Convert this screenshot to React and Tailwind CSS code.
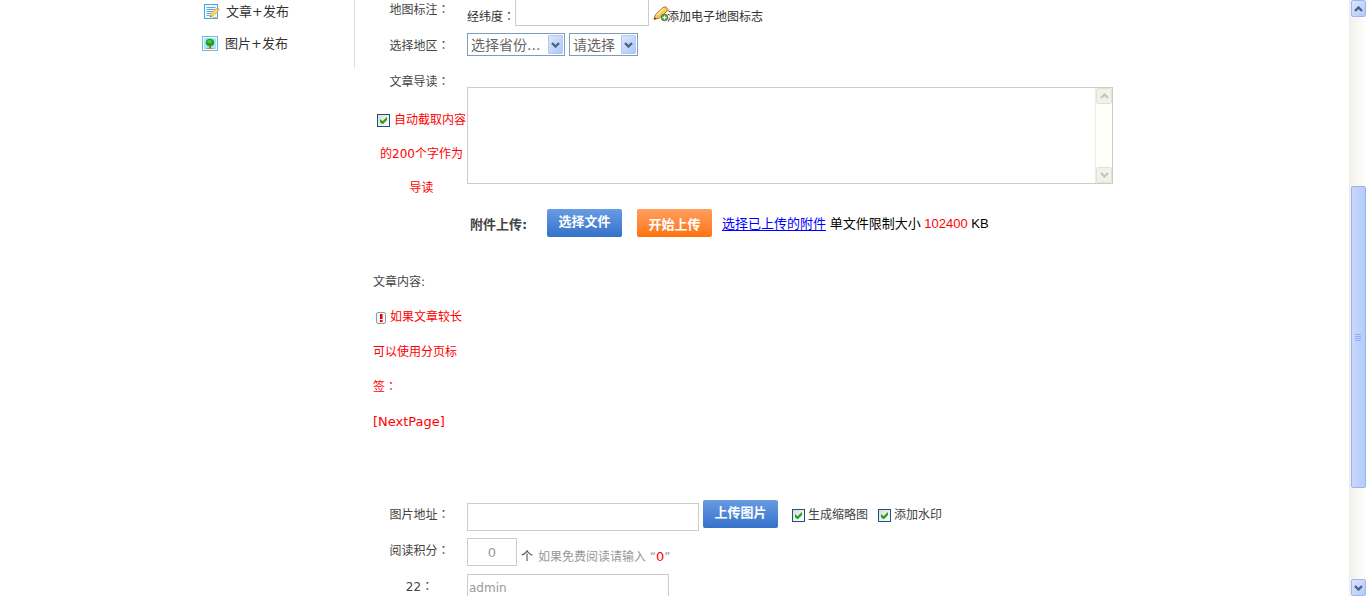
import { useState } from "react";
import clsx from "clsx";

// fullwidth colon, centred in its cell
function Colon() {
  return <span className="leading-none [font-family:'Noto_Sans_CJK_JP',sans-serif]">：</span>;
}

function NoteIcon() {
  return (
    <svg width="16" height="16" viewBox="0 0 16 16" aria-hidden="true">
      <rect x="0.5" y="0.5" width="13" height="14" fill="#f2faff" stroke="#2fb0e8" />
      <path d="M2.5 3.5h9M2.5 5.5h9M2.5 7.5h7M2.5 9.5h5M2.5 11.5h3" stroke="#6fa3d8" />
      <path d="M6 13l1.200-3.500 5.300-5 2.200 2.200-5.200 5z" fill="#f8d860" stroke="#d9a93c" strokeWidth="0.7" />
      <path d="M12.500 4.500l1.500-1 1.800 1.800-1.100 1.400z" fill="#ee9c9c" />
      <path d="M6 13l.6-1.800 1.300 1.200z" fill="#555" />
      <path d="M9 13.500h5" stroke="#e8b64a" />
    </svg>
  );
}

function PictureIcon() {
  return (
    <svg width="16" height="16" viewBox="0 0 16 16" aria-hidden="true">
      <rect x="0.5" y="0.5" width="15" height="14" fill="#fff" stroke="#5cc0ea" />
      <rect x="2" y="2" width="12" height="11" fill="#a5e6fb" />
      <path d="M3 13q5-2.500 10 0z" fill="#d98a3c" />
      <path d="M7.200 8h1.800v4.500H7.200z" fill="#b5531c" />
      <ellipse cx="8" cy="6.500" rx="4.200" ry="3.800" fill="#23a01e" />
      <ellipse cx="7.500" cy="5.500" rx="2.200" ry="1.800" fill="#46c63c" />
    </svg>
  );
}

function PencilAddIcon() {
  return (
    <svg width="16" height="16" viewBox="0 0 16 16" aria-hidden="true">
      <path d="M1 13.500l1.500-5L10 1.500q2-1.500 3.800.2t.2 3.500L6.500 12z" fill="#fbc75c" stroke="#b9762a" />
      <path d="M4 9l7-6.500" stroke="#ffe9a8" strokeWidth="1.500" />
      <path d="M1 13.500l.6-2.200 1.800 1.500z" fill="#333" />
      <circle cx="11.500" cy="11.500" r="3.300" fill="#4c9a3c" stroke="#2c6d22" strokeWidth="0.7" />
      <path d="M11.500 9.500v4M9.500 11.500h4" stroke="#fff" strokeWidth="1.300" />
    </svg>
  );
}

function WarnIcon() {
  return (
    <svg width="10" height="12" viewBox="0 0 10 12" aria-hidden="true">
      <rect x="0.5" y="0.5" width="9" height="11" rx="1.500" fill="#f4f4f4" stroke="#999" />
      <path d="M4 2h2.500v5H4zM4 8h2.500v2H4z" fill="#e60000" />
    </svg>
  );
}

function Chevron({ up, color }) {
  return (
    <svg width="9" height="6" viewBox="0 0 9 6" aria-hidden="true">
      <path d={up ? "M1 5l3.500-3.500L8 5" : "M1 1l3.500 3.500L8 1"} fill="none" stroke={color} strokeWidth="2.400" />
    </svg>
  );
}

function CheckBox({ id, checked, onChange }) {
  return (
    <span className="relative inline-block h-[13px] w-[13px] shrink-0 align-middle">
      <input
        id={id}
        type="checkbox"
        checked={checked}
        onChange={onChange}
        className="block h-[13px] w-[13px] appearance-none border border-[#1c5180] bg-linear-to-br from-[#dcdcd7] to-white"
      />
      {checked && (
        <svg width="13" height="13" viewBox="0 0 13 13" className="pointer-events-none absolute inset-0" aria-hidden="true">
          <path d="M3 5v3l2 2h1l4-4V3L5.500 7.200z" fill="#21a121" />
        </svg>
      )}
    </span>
  );
}

function Select({ label, options, className }) {
  return (
    <div className={clsx("relative h-[23px]", className)}>
      <select
        aria-label={label}
        className="h-full w-full appearance-none border border-[#7f9db9] bg-white pl-[3px] text-sm leading-[20px] text-[#666]"
      >
        {options.map((o) => <option key={o}>{o}</option>)}
      </select>
      <span className="pointer-events-none absolute top-0.5 right-0.5 flex h-[19px] w-[15px] items-center justify-center rounded-[1px] border border-[#b4c8f6] bg-linear-to-br from-[#dbe6fe] to-[#aec8f7]">
        <Chevron color="#4d6185" />
      </span>
    </div>
  );
}

function UploadButton({ children, className }) {
  return (
    <button
      type="button"
      className={clsx("flex h-7 w-[75px] shrink-0 justify-center rounded-[2px] bg-linear-to-b text-[13px] font-bold text-white", className)}
    >
      {children}
    </button>
  );
}

function Row({ label, htmlFor, className, children }) {
  return (
    <div className="flex h-9">
      <label htmlFor={htmlFor} className="w-[95px] shrink-0 text-center leading-9">{label}<Colon /></label>
      <div className={clsx("flex flex-1", className)}>{children}</div>
    </div>
  );
}

function Sidebar() {
  return (
    <nav className="h-[68px] w-[161px] shrink-0 border-r border-[#ddd] text-[13px] text-[#333]">
      <a href="#article" className="flex h-[23px] items-center gap-1.5 pl-2.5">
        <NoteIcon />
        文章+发布
      </a>
      <a href="#picture" className="mt-[9px] flex h-[23px] items-center gap-[7px] pl-2">
        <PictureIcon />
        图片+发布
      </a>
    </nav>
  );
}

function PageScrollbar() {
  return (
    <div className="flex w-[17px] shrink-0 flex-col items-center border-l border-[#eeede5] bg-linear-to-r from-[#f3f1ec] to-[#fefefb]">
      <button type="button" aria-label="Scroll up" className="flex h-[17px] w-[15px] items-center justify-center rounded-[2px] border border-[#9db8ee] bg-linear-to-br from-[#d9e4fe] to-[#b4c9fa]">
        <Chevron up color="#4d6185" />
      </button>
      <div className="flex w-full flex-1 flex-col items-center">
        <div className="grow-[170] basis-0" />
        <div className="flex w-[15px] grow-[301] basis-0 flex-col items-center justify-center gap-px rounded-[2px] border border-[#98b4ec] bg-linear-to-r from-[#c9d7fc] to-[#b5ccfb]">
          <span className="h-px w-1.5 bg-[#8cb0f8]" />
          <span className="h-px w-1.5 bg-[#8cb0f8]" />
          <span className="h-px w-1.5 bg-[#8cb0f8]" />
          <span className="h-px w-1.5 bg-[#8cb0f8]" />
        </div>
        <div className="grow-[91] basis-0" />
      </div>
      <button type="button" aria-label="Scroll down" className="flex h-[17px] w-[15px] items-center justify-center rounded-[2px] border border-[#9db8ee] bg-linear-to-br from-[#d9e4fe] to-[#b4c9fa]">
        <Chevron color="#4d6185" />
      </button>
    </div>
  );
}

export default function App() {
  const [autoIntro, setAutoIntro] = useState(true);
  const [thumb, setThumb] = useState(true);
  const [watermark, setWatermark] = useState(true);

  return (
    <div className="flex h-screen overflow-hidden bg-white text-xs text-[#444] [font-family:'DejaVu_Sans','Noto_Sans_CJK_SC',sans-serif]">
      <div className="min-w-0 flex-1 overflow-hidden">
        <div className="mx-auto flex max-w-[961px] items-start">
          <Sidebar />
          <form className="-mt-2 ml-[17px] min-w-0 flex-1" onSubmit={(e) => e.preventDefault()}>
            <Row label="地图标注" htmlFor="coords" className="items-end pb-[2px] leading-[18px] text-[#333]">
              <span>经纬度<Colon /></span>
              <input id="coords" className="h-7 w-[134px] border border-[#ccc]" />
              <a href="#map" className="ml-1 flex items-end">
                <span className="pb-1"><PencilAddIcon /></span>
                <span className="-ml-0.5">添加电子地图标志</span>
              </a>
            </Row>

            <Row label="选择地区" className="items-center gap-1 pb-[3px]">
              <Select label="选择省份" options={["选择省份..."]} className="w-[98px]" />
              <Select label="请选择" options={["请选择"]} className="w-[69px]" />
            </Row>

            {/* Intro */}
            <div className="flex">
              <div className="w-[95px] shrink-0 text-center">
                <label htmlFor="intro" className="block leading-9">文章导读<Colon /></label>
                <div className="mt-[3px] pl-1 leading-[34px] text-[#f00]">
                  <CheckBox id="auto" checked={autoIntro} onChange={(e) => setAutoIntro(e.target.checked)} />
                  <label htmlFor="auto"> 自动截取内容的200个字作为导读</label>
                </div>
              </div>
              <div className="min-w-0 flex-1 pt-[23px]">
                <div className="flex h-[97px] w-[646px] border border-[#ccc]">
                  <textarea id="intro" className="min-w-0 flex-1 resize-none" />
                  <div className="flex w-[17px] flex-col justify-between border-l border-[#eeede5] bg-[#fefefb]">
                    <button type="button" aria-label="Scroll up" className="flex h-4 items-center justify-center rounded-[2px] border border-[#e3e2d8] bg-[#f3f2ea]">
                      <Chevron up color="#c9c7ba" />
                    </button>
                    <button type="button" aria-label="Scroll down" className="flex h-4 items-center justify-center rounded-[2px] border border-[#e3e2d8] bg-[#f3f2ea]">
                      <Chevron color="#c9c7ba" />
                    </button>
                  </div>
                </div>
              </div>
            </div>

            {/* Attachments */}
            <div className="mt-1 flex h-7 pl-[95px] text-[13px] text-black">
              <strong className="w-20 pl-[3px] leading-8 text-[#444]">附件上传:</strong>
              <UploadButton className="from-[#689ce3] to-[#3571c9] leading-[26px]">选择文件</UploadButton>
              <UploadButton className="ml-[15px] from-[#ff9f5c] to-[#ff7200] leading-8">开始上传</UploadButton>
              <div className="ml-2.5 leading-[30px] whitespace-nowrap [font-family:'Liberation_Sans','Noto_Sans_CJK_SC',sans-serif]">
                <a href="#files" className="text-[#00f] underline underline-offset-2">选择已上传的附件</a>
                {" "}单文件限制大小 <span className="text-[#f00]">102400</span> KB
              </div>
            </div>

            {/* Body */}
            <div className="mt-7 w-[95px] pl-px leading-[35px] text-[#f00]">
              <p className="text-[#444]">文章内容:</p>
              <p className="flex items-center gap-1 pl-[3px]"><WarnIcon />如果文章较长</p>
              <p>可以使用分页标</p>
              <p>签<Colon /></p>
              <p className="text-[13px] leading-[34px]">[NextPage]</p>
            </div>

            <div className="mt-[58px]">
              <Row label="图片地址" htmlFor="pic" className="items-start">
                <input id="pic" className="mt-1.5 h-7 w-[232px] border border-[#ccc]" />
                <UploadButton className="mt-[3px] ml-1 from-[#689ce3] to-[#3571c9] leading-[26px]">上传图片</UploadButton>
                <div className="ml-3.5 flex h-9 items-center gap-[3px]">
                  <CheckBox id="thumb" checked={thumb} onChange={(e) => setThumb(e.target.checked)} />
                  <label htmlFor="thumb">生成缩略图</label>
                </div>
                <div className="ml-2.5 flex h-9 items-center gap-[3px]">
                  <CheckBox id="mark" checked={watermark} onChange={(e) => setWatermark(e.target.checked)} />
                  <label htmlFor="mark">添加水印</label>
                </div>
              </Row>
            </div>

            <Row label="阅读积分" htmlFor="points" className="items-end pb-[3px] leading-[18px]">
              <input id="points" defaultValue="0" className="h-7 w-[50px] border border-[#ccc] text-center text-[13px] text-[#999]" />
              <span className="ml-1">个</span>
              <span className="ml-[5px] text-[#999]">如果免费阅读请输入 “<b className="text-[13px] font-normal text-[#f00]">0</b>”</span>
            </Row>

            <Row label="22" htmlFor="author" className="items-end pb-[3px]">
              <input id="author" defaultValue="admin" className="h-7 w-[202px] border border-[#ccc] pl-px text-[#999]" />
            </Row>
          </form>
        </div>
      </div>
      <PageScrollbar />
    </div>
  );
}
